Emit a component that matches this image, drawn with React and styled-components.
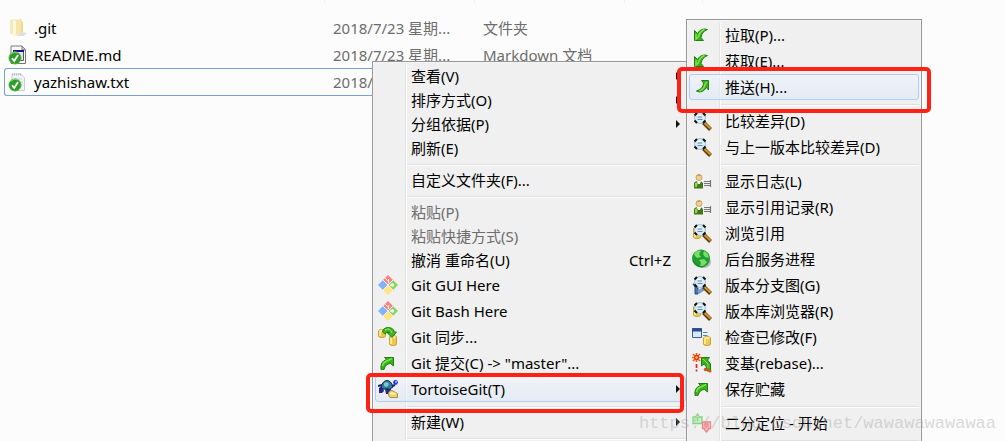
import React from 'react';
import styled, { createGlobalStyle, css } from 'styled-components';

const GlobalStyle = createGlobalStyle`
  * {
    box-sizing: border-box;
  }

  body {
    margin: 0;
    background: #fcfcfc;
    color: #000;
    font-family: "Noto Sans", "Noto Sans CJK SC", sans-serif;
    font-size: 15px;
  }
`;

const Desktop = styled.main`
  position: relative;
  height: 100vh;
  overflow: hidden;
`;

const FileTable = styled.table`
  table-layout: fixed;
  width: 699px;
  margin-left: 4px;
  border-collapse: separate;
  border-spacing: 0;
`;

const ColumnHead = styled.th`
  width: ${({ $width }) => $width}px;
  height: 3px;
  padding: 0;
  border-right: 1px solid #f0f0f2;
`;

const FileRow = styled.tr`
  td {
    height: 27px;
    padding: 0 8px;
    border: solid transparent;
    border-width: 1px 0;
    line-height: 20px;
    color: #6d6d6d;
    white-space: nowrap;
  }

  td:first-child {
    padding: 0 3px;
    border-left-width: 1px;
    border-radius: 3px 0 0 3px;
    color: #000;
  }

  td:last-child {
    border-right-width: 1px;
    border-radius: 0 3px 3px 0;
  }

  ${({ $selected }) => $selected && css`
    td {
      height: 28px;
      border-color: #7da2ce;
    }
  `}
`;

const ListSpacer = styled.tr`
  height: 11px;
`;

const FileName = styled.span`
  display: flex;
  align-items: center;
  gap: 6px;
`;

const Icon = styled.svg`
  flex: none;
  display: block;
  width: 20px;
  height: 20px;
`;

const Menu = styled.div`
  position: absolute;
  left: ${({ $left }) => $left}px;
  top: ${({ $top }) => $top}px;
  bottom: -12px;
  width: ${({ $width }) => $width}px;
  padding: 2px;
  border: 1px solid #979797;
  background: linear-gradient(90deg, #e2e3e3 50%, #fff 50%) 32px 3px / 2px 100% no-repeat #f0f0f0;
  box-shadow: inset 0 0 0 1px #f5f5f5;
`;

const Item = styled.button`
  display: grid;
  grid-template-columns: 20px 1fr auto 4px;
  align-items: center;
  width: 100%;
  height: ${({ $tall }) => ($tall ? 26 : 24)}px;
  padding: 0 5px 0 2px;
  border: 1px solid transparent;
  border-radius: 3px;
  background: none;
  color: #000;
  font: inherit;
  line-height: 20px;
  text-align: left;
  white-space: nowrap;

  &:disabled {
    color: #6d6d6d;
  }

  ${({ $active }) => $active && css`
    border-color: #aecff7;
    background: linear-gradient(rgba(240, 244, 250, 0.6), rgba(220, 232, 247, 0.6));
  `}
`;

const Label = styled.span`
  grid-column: 2;
  padding-left: 13px;
`;

const Shortcut = styled.span`
  grid-column: 3;
  padding-right: 5px;
`;

const SubmenuArrow = styled.span`
  grid-column: 4;
  border: solid transparent;
  border-width: 4px 0 4px 4px;
  border-left-color: #111;
`;

const Separator = styled.hr`
  height: 2px;
  margin: 4px 0 2px 32px;
  border: 0;
  border-top: 1px solid #e0e0e0;
  border-bottom: 1px solid #fff;
`;

const Divider = styled.div`
  display: flow-root;
  height: 8px;
`;

const Highlight = styled.div`
  position: absolute;
  left: ${({ $left }) => $left}px;
  top: ${({ $top }) => $top}px;
  width: ${({ $width }) => $width}px;
  height: ${({ $height }) => $height}px;
  border: 4px solid #ff2214;
  border-radius: 5px;
  pointer-events: none;
`;

const Watermark = styled.div`
  position: absolute;
  right: 10px;
  bottom: 6px;
  color: rgba(160, 160, 160, 0.4);
  font: 17px/22px "Liberation Mono", monospace;
  pointer-events: none;
`;

const Svg = ({ children }) => (
  <Icon viewBox="0 0 20 20" aria-hidden="true">{children}</Icon>
);

const CheckBadge = () => (
  <>
    <circle cx="7" cy="13" r="6" fill="#2f9d27" stroke="#4fb044" />
    <path d="M3 9.5a5 5 0 0 1 7-1.5" fill="none" stroke="#8bd97d" />
    <path d="M4 13.2 6.2 16 10 10" fill="none" stroke="#fff" strokeWidth="1.8" />
  </>
);

const Cylinder = ({ x, y, h = 8 }) => (
  <g transform={`translate(${x} ${y})`}>
    <path d={`M.5 2Q.5.5 4 .5T7.5 2V${h}Q7.5 ${h + 1.5} 4 ${h + 1.5}T.5 ${h}Z`} fill="#efc94c" stroke="#c9a23a" />
    <path d={`M2 3V${h}`} stroke="#fff3a8" strokeWidth="1.5" />
    <ellipse cx="4" cy="2" rx="3" ry="1.2" fill="#fbe997" />
  </g>
);

const Lens = () => (
  <>
    <path d="M11.5 11.5 18.5 18.5" stroke="#5e3c08" strokeWidth="4" />
    <path d="M12 11.5 18.5 17.5" stroke="#d3932a" strokeWidth="2" />
    <circle cx="8" cy="7" r="5.5" fill="#d6edf8" stroke="#a9c3d0" />
    <path d="M2.5 4.5 5 2M11 2 13.5 4.500M2.5 9.5 5 12M11 12 13.5 9.5" stroke="#111" strokeWidth="2" />
    <path d="M5.5 6H10M5.5 8.5H10.5" stroke="#6e8ca0" strokeWidth="1.2" />
    <path d="M5 4.5h4" stroke="#fff" />
  </>
);

const FolderIcon = () => (
  <Svg>
    <path d="M13 14 19 15 16 18 9 18Z" fill="#dedede" />
    <path d="M2 2 7 1V17L2 16Z" fill="#f7eab9" />
    <path d="M5 2 14 1V15L6 18Z" fill="#f5e5ac" />
    <path d="M5 2 8 3V18L5 17Z" fill="#fdf7dc" />
    <path d="M13 3 15 4V14L13 15Z" fill="#ecd992" />
  </Svg>
);

const MarkdownIcon = () => (
  <Svg>
    <path d="M3 1H14L17.5 4.500V18.5H3Z" fill="#fff" stroke="#777" />
    <path d="M14 1V5H17" fill="#ccc" stroke="#777" />
    <path d="M5.5 6.5H15.5V15.5H5.5Z" fill="#e4e4ef" stroke="#555" />
    <path d="M5 6H16" stroke="#15158a" strokeWidth="2" />
    <CheckBadge />
  </Svg>
);

const TextIcon = () => (
  <Svg>
    <path d="M4 2H13L16.5 6V18.5H4Z" fill="#f1f4f8" stroke="#cbd0d7" />
    <path d="M4 2.5H13" stroke="#b8b8b8" strokeDasharray="1 1" strokeWidth="2" />
    <path d="M6 7H14M12 10H15M13 13H15" stroke="#c6d4e4" />
    <CheckBadge />
  </Svg>
);

const PullIcon = () => (
  <Svg>
    <path d="M2.5 5.5V15.5H11.5L9 12.5Q9.5 7 15.500 4.5Q9 2.5 5.5 8.5Z" fill="#3bb01c" stroke="#1f8012" />
    <path d="M4 9V14L6.5 11.5Q8 6 12.5 4.5" fill="none" stroke="#83e04f" strokeWidth="1.500" />
  </Svg>
);

const PushIcon = () => (
  <Svg>
    <path d="M16.5 13V3.500H9.500L11.500 6Q11.500 11.5 4.500 14Q10 17 14.5 10.5Z" fill="#3bb01c" stroke="#1f8012" />
    <path d="M15 5 12.8 7.5Q12.500 12 7.500 14" fill="none" stroke="#83e04f" strokeWidth="1.500" />
  </Svg>
);

const CommitIcon = () => (
  <Svg>
    <path d="M4.5 16.5H3Q2 8.5 8.500 6.5L6.500 4.500H15.500V13L12.500 10.5Q7.500 10.5 6 16.5Z" fill="#3bb01c" stroke="#1f8012" />
    <path d="M4.5 13Q5.5 8.5 10 7.500L14 5.500" fill="none" stroke="#83e04f" strokeWidth="1.500" />
  </Svg>
);

const DiffIcon = () => (
  <Svg><Lens /></Svg>
);

const LogIcon = () => (
  <Svg>
    <path d="M2 17.5V12Q3 10 6.500 10T11 12V17.5Z" fill="#3e7819" />
    <path d="M3 12 6 11 5 16H3Z" fill="#9bd44b" />
    <path d="M5 10H9L8 13H6Z" fill="#fff" />
    <circle cx="7" cy="6.5" r="3" fill="#f2cf91" stroke="#b98b4e" strokeWidth=".7" />
    <path d="M4.5 5Q7 1.5 9.5 5Z" fill="#c69f57" />
    <path d="M12 10.5H18M12 12.5H18M12 14.5H18M18.500 9V16" stroke="#777" strokeWidth="1.2" />
  </Svg>
);

const BrowseIcon = () => (
  <Svg><Cylinder x={1} y={4} h={10} /><Lens /></Svg>
);

const DaemonIcon = () => (
  <Svg>
    <ellipse cx="12" cy="13" rx="7" ry="6" fill="#b5b5b5" />
    <circle cx="9" cy="9.5" r="9" fill="#229b31" />
    <path d="M2 5Q5 0 9 2L7 5 9 8 5 9 3 7ZM12 2Q17 4 16.5 9L13 8 11 5ZM7 11 12 10 15 13Q12 18 8 17L9 14Z" fill="#79df67" />
    <path d="M1 11Q4 18 11 18" fill="none" stroke="#1c7f2e" />
  </Svg>
);

const GraphIcon = () => (
  <Svg>
    <path d="M1 9H8L6 11V19H3V12Z" fill="#4f78b5" stroke="#254b83" />
    <path d="M5 16 11 12 13 15 7 19" fill="#7c9cca" />
    <Lens />
  </Svg>
);

const ModifiedIcon = () => (
  <Svg>
    <path d="M.5 1.5H9.5V10.5H.5Z" fill="#d8e7fb" stroke="#3b5f97" />
    <path d="M0 3H10" stroke="#244b8b" strokeWidth="3" />
    <path d="M11 5.5H15.5M11 8.5H15.5" stroke="#4f85a9" />
    <Cylinder x={11} y={9} h={8} />
  </Svg>
);

const RebaseIcon = () => (
  <Svg>
    <path d="M4.5 0V9M0 4.5H9M1 1 8 8M8 1 1 8" stroke="#ff5a20" strokeWidth="1.6" />
    <circle cx="4.5" cy="4.5" r="2" fill="#ff9a3a" stroke="#d82c11" />
    <path d="M4.500 11V15M4.5 16.5V18.5" stroke="#ed1c16" strokeWidth="1.6" />
    <path d="M9.5 4.5H17.5L15.5 7 18.5 11V18H15Q15 13 12 11L9.500 13Z" fill="#3bb01c" stroke="#1f8012" />
    <path d="M11 6 16 11V15" fill="none" stroke="#87df55" />
    <circle cx="13.500" cy="16.5" r="1.8" fill="#f04726" />
    <circle cx="18" cy="18" r="1.5" fill="#f04726" />
  </Svg>
);

const BisectIcon = () => (
  <Svg>
    <g fill="#c5efc4" stroke="#87d184" strokeWidth="1.3">
      <path d="M1 4H10V10.5H1Z" />
      <path d="M3.5 4 5.5 1 7.5 4M5.5 5V8" />
    </g>
    <g fill="#fbd0d0" stroke="#ee8587" strokeWidth="1.3">
      <path d="M10.5 9H18.5V15.5H10.5Z" />
      <path d="M12 15.5 14.5 19 17 15.5M13 11H16V13.5H13Z" />
    </g>
  </Svg>
);

const GitIcon = () => (
  <Svg>
    <path d="M10 0 15 5 10 9.500 5 5Z" fill="#ff8080" />
    <path d="M5 5 9.500 10 5 15 0 10Z" fill="#80b3ff" />
    <path d="M15 5 20 10 15 15 10.500 10Z" fill="#8dd35f" />
    <path d="M10 10.500 15 15 10 20 5 15Z" fill="#ffe680" />
    <path d="M6.500 2.500 10 6M4.500 4.500 10 10 15.500 4.500M4.500 15.500 10 10 15.500 15.500" fill="none" stroke="#f0f0f0" />
    <path d="M10.500 4V8M12 10H15" stroke="#f0f0f0" strokeWidth="1.300" />
    <circle cx="14.5" cy="10" r="1.700" fill="#f0f0f0" />
  </Svg>
);

const SyncIcon = () => (
  <Svg>
    <Cylinder x={0} y={2} h={7} />
    <Cylinder x={11} y={8} h={9} />
    <path d="M4.5 5Q5 .5 10.5 .5Q16 1 16 5H18.5L14 10.5 9 5.5H12Q9.500 3.5 7 7Z" fill="#42b51f" stroke="#1f8012" />
    <path d="M7 3Q12 0 14 6" fill="none" stroke="#9bea67" />
  </Svg>
);

const TortoiseIcon = () => (
  <Svg>
    <path d="M1 9 4 7 6 12 4 14H1ZM7 10H13L12 15H8Z" fill="#26268b" />
    <path d="M3 8Q5 1.5 9 1.5T15 8L12 10H5Z" fill="#367d9c" stroke="#10244d" />
    <path d="M6 4 9 3 11 5 9 8 6 7Z" fill="#79c8cc" />
    <path d="M0 7 4 6M14 7 17 6" stroke="#172265" strokeWidth="2" />
    <circle cx="17.5" cy="3.5" r="2.4" fill="#233ee0" />
    <circle cx="18" cy="3" r=".8" fill="#fff" />
    <path d="M10.5 14Q11 11.5 14 11.5L19.5 14.5V18.5H12Q10.5 17.5 10.5 14Z" fill="#efd278" stroke="#a98b3b" />
    <path d="M12 14.5H18" stroke="#fff6bd" strokeWidth="1.5" />
  </Svg>
);

const files = [
  { name: '.git', icon: FolderIcon, date: '2018/7/23 星期...', type: '文件夹' },
  { name: 'README.md', icon: MarkdownIcon, date: '2018/7/23 星期...', type: 'Markdown 文档' },
  { name: 'yazhishaw.txt', icon: TextIcon, date: '2018/7/23 星期...', type: '文本文档', selected: true },
];

const contextItems = [
  { label: '查看(V)', submenu: true },
  { label: '排序方式(O)', submenu: true },
  { label: '分组依据(P)', submenu: true },
  { label: '刷新(E)' },
  null,
  { label: '自定义文件夹(F)...' },
  null,
  { label: '粘贴(P)', disabled: true },
  { label: '粘贴快捷方式(S)', disabled: true },
  { label: '撤消 重命名(U)', shortcut: 'Ctrl+Z' },
  { label: 'Git GUI Here', icon: GitIcon },
  { label: 'Git Bash Here', icon: GitIcon },
  { label: 'Git 同步...', icon: SyncIcon },
  { label: 'Git 提交(C) -> "master"...', icon: CommitIcon },
  { label: 'TortoiseGit(T)', icon: TortoiseIcon, submenu: true, active: true },
  null,
  { label: '新建(W)', submenu: true },
  null,
];

const tortoiseItems = [
  { label: '拉取(P)...', icon: PullIcon },
  { label: '获取(E)...', icon: PullIcon },
  { label: '推送(H)...', icon: PushIcon, active: true },
  null,
  { label: '比较差异(D)', icon: DiffIcon },
  { label: '与上一版本比较差异(D)', icon: DiffIcon },
  null,
  { label: '显示日志(L)', icon: LogIcon },
  { label: '显示引用记录(R)', icon: LogIcon },
  { label: '浏览引用', icon: BrowseIcon },
  { label: '后台服务进程', icon: DaemonIcon },
  { label: '版本分支图(G)', icon: GraphIcon },
  { label: '版本库浏览器(R)', icon: BrowseIcon },
  { label: '检查已修改(F)', icon: ModifiedIcon },
  { label: '变基(rebase)...', icon: RebaseIcon },
  { label: '保存贮藏', icon: CommitIcon },
  null,
  { label: '二分定位 - 开始', icon: BisectIcon },
  null,
];

const MenuItems = ({ items }) => items.map((item, index) => {
  if (!item) {
    return <Divider key={index}><Separator /></Divider>;
  }

  const ItemIcon = item.icon;

  return (
    <Item
      key={index}
      type="button"
      role="menuitem"
      disabled={item.disabled}
      $tall={Boolean(item.icon)}
      $active={item.active}
    >
      {ItemIcon && <ItemIcon />}
      <Label>{item.label}</Label>
      {item.shortcut && <Shortcut>{item.shortcut}</Shortcut>}
      {item.submenu && <SubmenuArrow />}
    </Item>
  );
});

const App = () => {
  return (
    <>
      <GlobalStyle />
      <Desktop>
        <FileTable>
          <thead>
            <tr>
              <ColumnHead $width={321} />
              <ColumnHead $width={150} />
              <ColumnHead $width={150} />
              <ColumnHead $width={78} />
            </tr>
          </thead>
          <tbody>
            <ListSpacer />
            {files.map(({ name, icon: TypeIcon, date, type, selected }) => (
              <FileRow key={name} $selected={selected}>
                <td><FileName><TypeIcon />{name}</FileName></td>
                <td>{date}</td>
                <td>{type}</td>
                <td />
              </FileRow>
            ))}
          </tbody>
        </FileTable>

        <Menu role="menu" $left={372} $top={61} $width={317}>
          <MenuItems items={contextItems} />
        </Menu>
        <Menu role="menu" $left={686} $top={19} $width={236}>
          <MenuItems items={tortoiseItems} />
        </Menu>

        <Highlight $left={677} $top={67} $width={254} $height={46} />
        <Highlight $left={366} $top={373} $width={318} $height={40} />
        <Watermark>https://blog.csdn.net/wawawawawawaa</Watermark>
      </Desktop>
    </>
  );
};

export default App;
